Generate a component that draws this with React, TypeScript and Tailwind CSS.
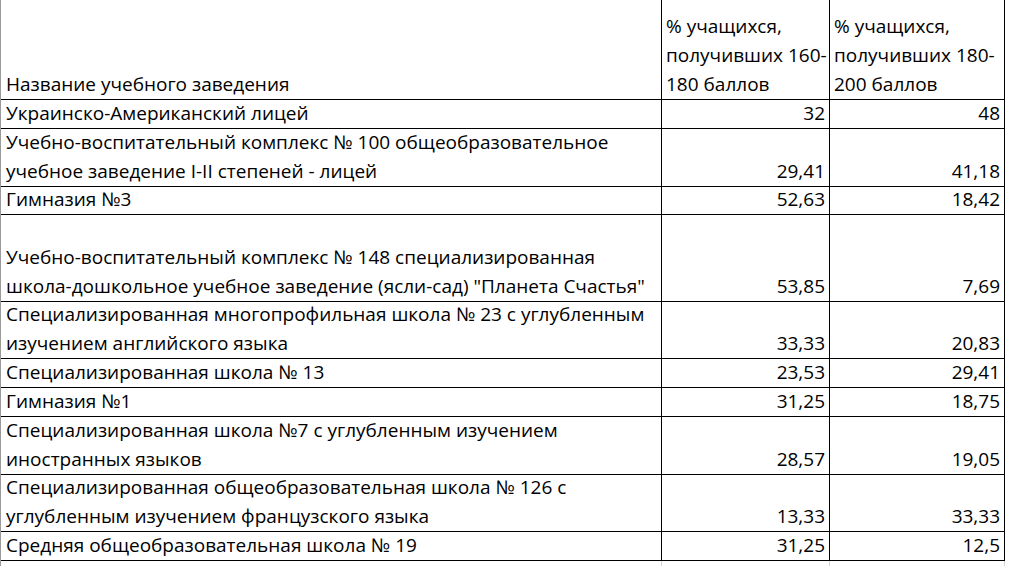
import React from "react";

type Row = {
  name: string[];
  a: string;
  b: string;
  h: string;
};

const rows: Row[] = [
  { name: ["Украинско-Американский лицей"], a: "32", b: "48", h: "h-[29px]" },
  {
    name: [
      "Учебно-воспитательный комплекс № 100 общеобразовательное",
      "учебное заведение I-II степеней - лицей",
    ],
    a: "29,41",
    b: "41,18",
    h: "h-[58px]",
  },
  { name: ["Гимназия №3"], a: "52,63", b: "18,42", h: "h-[28px]" },
  {
    name: [
      "Учебно-воспитательный комплекс № 148 специализированная",
      'школа-дошкольное учебное заведение (ясли-сад) "Планета Счастья"',
    ],
    a: "53,85",
    b: "7,69",
    h: "h-[87px]",
  },
  {
    name: [
      "Специализированная многопрофильная школа № 23 с углубленным",
      "изучением английского языка",
    ],
    a: "33,33",
    b: "20,83",
    h: "h-[57px]",
  },
  { name: ["Специализированная школа № 13"], a: "23,53", b: "29,41", h: "h-[29px]" },
  { name: ["Гимназия №1"], a: "31,25", b: "18,75", h: "h-[29px]" },
  {
    name: [
      "Специализированная школа №7 с углубленным изучением",
      "иностранных языков",
    ],
    a: "28,57",
    b: "19,05",
    h: "h-[58px]",
  },
  {
    name: [
      "Специализированная общеобразовательная школа № 126 с",
      "углубленным изучением французского языка",
    ],
    a: "13,33",
    b: "33,33",
    h: "h-[57px]",
  },
  { name: ["Средняя общеобразовательная школа № 19"], a: "31,25", b: "12,5", h: "h-[29px]" },
];

function Lines({ lines }: { lines: string[] }) {
  return (
    <>
      {lines.map((l) => (
        <div key={l} className="whitespace-nowrap">
          {l}
        </div>
      ))}
    </>
  );
}

export default function App() {
  return (
    <div className="w-[1009px] h-[566px] overflow-hidden bg-white text-black font-['Open_Sans',sans-serif] text-[19px] leading-[29px]">
      <div className="w-[1005px] border-l border-[#9a9a9a]">
        {/* шапка */}
        <div className="flex h-[100px] border-b border-black">
          <div className="w-[661px] flex flex-col justify-end pl-[5px] border-r border-black">
            Название учебного заведения
          </div>
          <div className="w-[168px] flex flex-col justify-end pl-[4px] border-r border-black">
            <Lines lines={["% учащихся,", "получивших 160-", "180 баллов"]} />
          </div>
          <div className="w-[175px] flex flex-col justify-end pl-[4px] border-r border-black">
            <Lines lines={["% учащихся,", "получивших 180-", "200 баллов"]} />
          </div>
        </div>

        {rows.map((r) => (
          <div key={r.a + r.b} className={`flex border-b border-black ${r.h}`}>
            <div className="w-[661px] flex flex-col justify-end pl-[5px] border-r border-black">
              <Lines lines={r.name} />
            </div>
            <div className="w-[168px] flex flex-col justify-end items-end pr-[4px] border-r border-black">
              {r.a}
            </div>
            <div className="w-[175px] flex flex-col justify-end items-end pr-[4px] border-r border-black">
              {r.b}
            </div>
          </div>
        ))}

        <div className="flex h-[5px]">
          <div className="w-[661px] border-r border-[#d4d4d4]" />
          <div className="w-[168px] border-r border-[#d4d4d4]" />
          <div className="w-[175px] border-r border-[#d4d4d4]" />
        </div>
      </div>
    </div>
  );
}
